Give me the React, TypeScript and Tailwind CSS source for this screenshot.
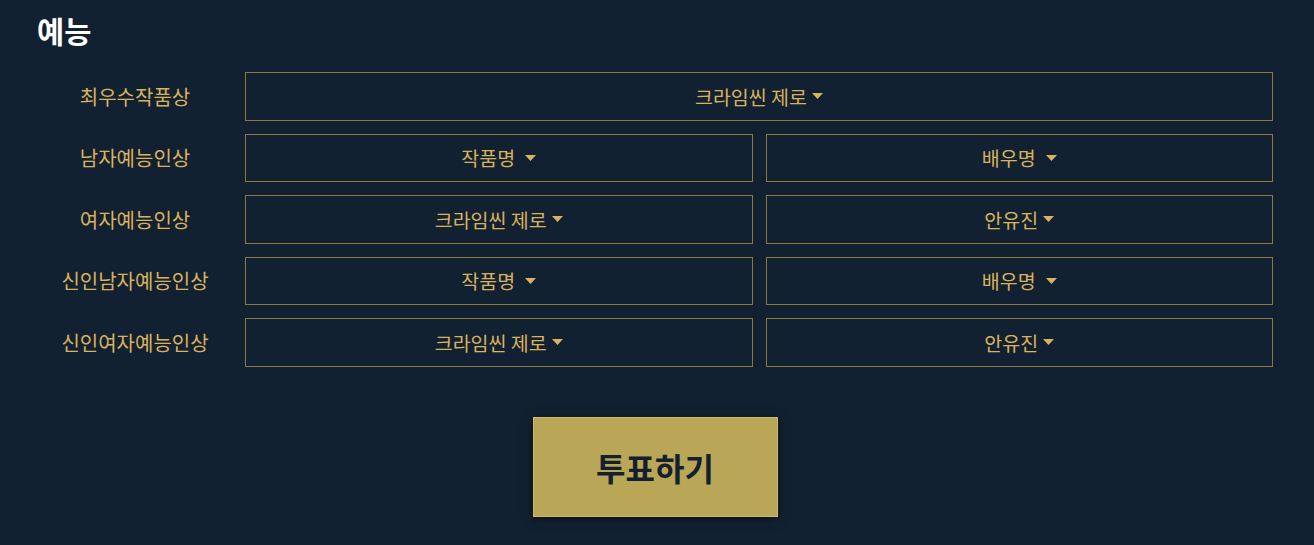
const Caret = () => (
  <svg width="11" height="6" viewBox="0 0 11 6" className="inline-block" aria-hidden>
    <path d="M0 0h11L5.5 6z" fill="#d9b25c" />
  </svg>
)

const Select = ({ value, spaced }: { value: string; spaced?: boolean }) => (
  <div className="flex h-[48.5px] flex-1 items-center justify-center border border-[#8c7b3c] text-[19.5px] text-[#d9b25c]">
    <span>{value}</span>
    <span className={spaced ? "ml-[10px] flex items-center" : "ml-[5px] flex items-center"}>
      <Caret />
    </span>
  </div>
)

const rows = [
  { label: "최우수작품상", items: [{ v: "크라임씬 제로" }] },
  { label: "남자예능인상", items: [{ v: "작품명", s: true }, { v: "배우명", s: true }] },
  { label: "여자예능인상", items: [{ v: "크라임씬 제로" }, { v: "안유진" }] },
  { label: "신인남자예능인상", items: [{ v: "작품명", s: true }, { v: "배우명", s: true }] },
  { label: "신인여자예능인상", items: [{ v: "크라임씬 제로" }, { v: "안유진" }] },
]

export default function App() {
  return (
    <div
      className="h-[545px] w-full overflow-hidden bg-[#122132]"
      style={{ fontFamily: '"Noto Sans CJK KR", "Noto Sans", sans-serif' }}
    >
      <div className="pl-[37px] pr-[41px] pt-[9px]">
        <h2 className="text-[29.5px] font-bold leading-[42px] text-white">예능</h2>
        <div className="mt-[21px] flex flex-col gap-[13px]">
          {rows.map((r) => (
            <div key={r.label} className="flex items-center">
              <div className="w-[196px] pt-[1px] text-center text-[20px] text-[#d9b25c]">{r.label}</div>
              <div className="ml-[12px] flex flex-1 gap-[13px]">
                {r.items.map((it, i) => (
                  <Select key={i} value={it.v} spaced={it.s} />
                ))}
              </div>
            </div>
          ))}
        </div>
      </div>
      <div className="mt-[50px] flex justify-center pr-[4px]">
        <button className="h-[100px] w-[245px] border border-[#d2b862] bg-[#b9a656] text-[32px] font-bold text-[#14202e] shadow-[0_2px_10px_rgba(0,0,0,0.5)]">
          투표하기
        </button>
      </div>
    </div>
  )
}
